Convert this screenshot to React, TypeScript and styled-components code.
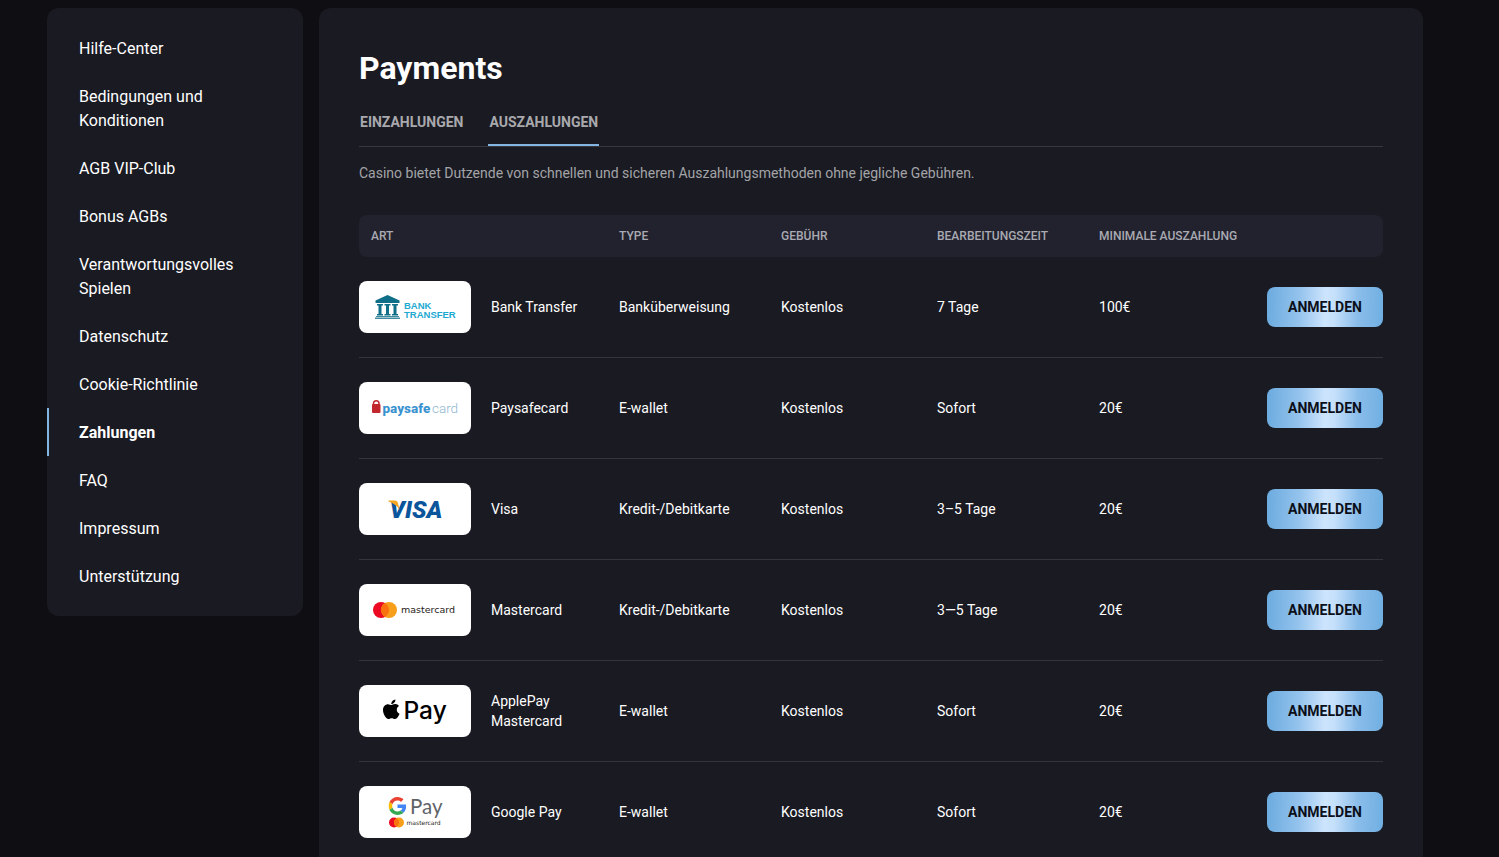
import React, { useState } from "react";
import styled, { createGlobalStyle } from "styled-components";
import { FaApple } from "react-icons/fa";

const GlobalStyle = createGlobalStyle`
  *, *::before, *::after { box-sizing: border-box; }
  body {
    margin: 0;
    background: #0f0f13;
    color: #fff;
    font-family: Roboto, "Liberation Sans", sans-serif;
    font-size: 14px;
    line-height: 20px;
  }
`;

const Page = styled.div`
  display: flex;
  align-items: flex-start;
  gap: 16px;
  padding: 8px 76px 8px 47px;
`;

const Sidebar = styled.nav`
  flex: 0 0 256px;
  padding: 16px 0;
  border-radius: 12px;
  background: #1a1a22;
`;

const NavList = styled.ul`
  margin: 0;
  padding: 0;
  list-style: none;
`;

const NavLink = styled.a<{ $active: boolean }>`
  display: block;
  padding: 13px 32px 11px 30px;
  border-left: 2px solid ${(p) => (p.$active ? "#84b5e0" : "transparent")};
  color: #fff;
  font-size: 16px;
  line-height: 24px;
  font-weight: ${(p) => (p.$active ? 700 : 400)};
  text-decoration: none;
`;

const Panel = styled.main`
  flex: 1;
  min-width: 0;
  padding: 40px;
  border-radius: 12px;
  background: #1a1a22;
`;

const Title = styled.h1`
  margin: 0 0 24px;
  font-size: 32px;
  line-height: 40px;
  font-weight: 700;
`;

const Tabs = styled.div`
  display: flex;
  gap: 24px;
  border-bottom: 1px solid #37383f;
`;

const Tab = styled.button<{ $active: boolean }>`
  padding: 0 1px 12px;
  border: 0;
  border-bottom: 2px solid ${(p) => (p.$active ? "#84b5e0" : "transparent")};
  background: none;
  color: #a9a9ad;
  font: 700 14px/20px Roboto, "Liberation Sans", sans-serif;
  text-transform: uppercase;
  cursor: pointer;
`;

const Intro = styled.p`
  margin: 16px 0 32px;
  color: #a3a4a7;
`;

const Table = styled.table`
  width: 100%;
  table-layout: fixed;
  border-spacing: 0;
`;

const Col = styled.col<{ $width?: number }>`
  width: ${(p) => (p.$width ? `${p.$width}px` : "auto")};
`;

const HeadCell = styled.th`
  height: 42px;
  padding: 0 12px;
  background: #22222e;
  color: #a9aab2;
  font-size: 12px;
  line-height: 16px;
  font-weight: 500;
  text-align: left;
  text-transform: uppercase;
  white-space: nowrap;
  &:first-child { border-radius: 8px 0 0 8px; }
  &:last-child { border-radius: 0 8px 8px 0; }
`;

const Cell = styled.td`
  height: 101px;
  padding: 0 12px;
  border-bottom: 1px solid #33343c;
`;

const LogoCell = styled(Cell)`
  padding: 0;
`;

const ActionCell = styled(Cell)`
  padding: 0;
  text-align: right;
`;

const LogoCard = styled.div`
  width: 112px;
  height: 52px;
  border-radius: 8px;
  background: #fff;
`;

const LogoSvg = styled.svg`
  display: block;
  width: 112px;
  height: 52px;
`;

const SignInButton = styled.button`
  min-width: 116px;
  height: 40px;
  padding: 0 20px;
  border: 0;
  border-radius: 8px;
  background: linear-gradient(92deg, #6babdf 0%, #94c3ed 28%, #cde4fd 50%, #c5e0fb 58%, #8abdea 78%, #70afe2 100%);
  color: #0c0f1a;
  font: 700 14px/20px Roboto, "Liberation Sans", sans-serif;
  text-transform: uppercase;
  cursor: pointer;
`;

function BankLogo() {
  return (
    <LogoSvg viewBox="0 0 224 104" role="img" aria-label="Bank Transfer">
      <g fill="#0f6f88">
        <path d="M57 28 L81 39 V44 H33 V39 Z" />
        {[36, 51, 66].map((x) => (
          <path key={x} d={`M${x} 46 h12 v3 h-3 v17 h3 v3 h-12 v-3 h3 v-17 h-3 z`} />
        ))}
        <path d="M34 70 H80 V72 H34 Z M32 73 H82 V76 H32 Z" opacity="0.8" />
      </g>
      <g fill="#1ea9d2" fontFamily="Liberation Sans, sans-serif" fontWeight="700" fontSize="19">
        <text x="90" y="56">BANK</text>
        <text x="90" y="73">TRANSFER</text>
      </g>
    </LogoSvg>
  );
}

function PaysafeLogo() {
  return (
    <LogoSvg viewBox="0 0 224 104" role="img" aria-label="Paysafecard">
      <path d="M29 45 V43 a5 5 0 0 1 11 0 V45" fill="none" stroke="#c1272d" strokeWidth="3" />
      <rect x="26" y="44" width="17" height="18" rx="2" fill="#c1272d" />
      <g fontFamily="Roboto, sans-serif" fontSize="27">
        <text x="47" y="61" fontWeight="800" fill="#3a92cf">paysafe</text>
        <text x="146" y="61" fontWeight="300" fill="#8fb6d0">card</text>
      </g>
    </LogoSvg>
  );
}

function VisaLogo() {
  return (
    <LogoSvg viewBox="0 0 224 104" role="img" aria-label="Visa">
      <text x="61" y="69" fontFamily="Roboto, sans-serif" fontStyle="italic" fontWeight="900" fontSize="48" fill="#0a559b">VISA</text>
      <path d="M59 35 H72 Q77 35 78 40 L81 54 Q75 42 59 37 Z" fill="#f5a623" />
    </LogoSvg>
  );
}

function Rings({ x, y, r }: { x: number; y: number; r: number }) {
  const half = r / 2;
  const reach = Math.sqrt(r * r - half * half);
  return (
    <>
      <circle cx={x - half} cy={y} r={r} fill="#eb0a22" />
      <circle cx={x + half} cy={y} r={r} fill="#f79e1b" />
      <path
        d={`M${x} ${y - reach} A${r} ${r} 0 0 1 ${x} ${y + reach} A${r} ${r} 0 0 1 ${x} ${y - reach} Z`}
        fill="#f9720f"
      />
    </>
  );
}

function MastercardLogo() {
  return (
    <LogoSvg viewBox="0 0 224 104" role="img" aria-label="Mastercard">
      <Rings x={52} y={52} r={16} />
      <text x="84" y="58" fontFamily="DejaVu Sans, sans-serif" fontSize="19" fill="#1f1b18">mastercard</text>
    </LogoSvg>
  );
}

function ApplePayLogo() {
  return (
    <LogoSvg viewBox="0 0 224 104" role="img" aria-label="Apple Pay">
      <FaApple x={42} y={26} size={45} color="#000" />
      <text x="89" y="68" fontFamily="Inter, sans-serif" fontWeight="500" fontSize="49" fill="#000">Pay</text>
    </LogoSvg>
  );
}

function GooglePayLogo() {
  return (
    <LogoSvg viewBox="0 0 224 104" role="img" aria-label="Google Pay">
      <svg x="59" y="22" width="36" height="36" viewBox="0 0 48 48">
        <path fill="#EA4335" d="M24 9.5c3.54 0 6.71 1.22 9.21 3.6l6.85-6.85C35.9 2.38 30.47 0 24 0 14.62 0 6.51 5.38 2.56 13.22l7.98 6.19C12.43 13.72 17.74 9.5 24 9.5z" />
        <path fill="#4285F4" d="M46.98 24.55c0-1.57-.15-3.09-.38-4.55H24v9.02h12.94c-.58 2.96-2.26 5.48-4.78 7.18l7.73 6c4.51-4.18 7.09-10.36 7.09-17.65z" />
        <path fill="#FBBC05" d="M10.53 28.59c-.48-1.45-.76-2.99-.76-4.59s.27-3.14.76-4.59l-7.98-6.19C.92 16.46 0 20.12 0 24c0 3.88.92 7.54 2.56 10.78l7.97-6.19z" />
        <path fill="#34A853" d="M24 48c6.48 0 11.93-2.13 15.89-5.81l-7.73-6c-2.15 1.45-4.92 2.3-8.16 2.3-6.26 0-11.57-4.22-13.47-9.91l-7.98 6.19C6.51 42.62 14.62 48 24 48z" />
      </svg>
      <text x="102" y="55" fontFamily="Lato, sans-serif" fontSize="41" fill="#5f6368">Pay</text>
      <Rings x={75} y={73} r={10} />
      <text x="95" y="78" fontFamily="DejaVu Sans, sans-serif" fontSize="12" fill="#1f1b18">mastercard</text>
    </LogoSvg>
  );
}

const navItems = [
  "Hilfe-Center",
  "Bedingungen und Konditionen",
  "AGB VIP-Club",
  "Bonus AGBs",
  "Verantwortungsvolles Spielen",
  "Datenschutz",
  "Cookie-Richtlinie",
  "Zahlungen",
  "FAQ",
  "Impressum",
  "Unterstützung",
];

const tabs = ["Einzahlungen", "Auszahlungen"];

const methods = [
  { Logo: BankLogo, name: "Bank Transfer", type: "Banküberweisung", time: "7 Tage", min: "100€" },
  { Logo: PaysafeLogo, name: "Paysafecard", type: "E-wallet", time: "Sofort", min: "20€" },
  { Logo: VisaLogo, name: "Visa", type: "Kredit-/Debitkarte", time: "3–5 Tage", min: "20€" },
  { Logo: MastercardLogo, name: "Mastercard", type: "Kredit-/Debitkarte", time: "3—5 Tage", min: "20€" },
  { Logo: ApplePayLogo, name: "ApplePay Mastercard", type: "E-wallet", time: "Sofort", min: "20€" },
  { Logo: GooglePayLogo, name: "Google Pay", type: "E-wallet", time: "Sofort", min: "20€" },
];

export default function App() {
  const [tab, setTab] = useState("Auszahlungen");

  return (
    <>
      <GlobalStyle />
      <Page>
        <Sidebar>
          <NavList>
            {navItems.map((item) => (
              <li key={item}>
                <NavLink href="#" $active={item === "Zahlungen"}>{item}</NavLink>
              </li>
            ))}
          </NavList>
        </Sidebar>
        <Panel>
          <Title>Payments</Title>
          <Tabs role="tablist">
            {tabs.map((name) => (
              <Tab
                key={name}
                type="button"
                role="tab"
                aria-selected={tab === name}
                $active={tab === name}
                onClick={() => setTab(name)}
              >
                {name}
              </Tab>
            ))}
          </Tabs>
          <Intro>Casino bietet Dutzende von schnellen und sicheren Auszahlungsmethoden ohne jegliche Gebühren.</Intro>
          <Table>
            <colgroup>
              <Col $width={120} />
              <Col $width={128} />
              <Col $width={162} />
              <Col $width={156} />
              <Col $width={162} />
              <Col />
              <Col $width={116} />
            </colgroup>
            <thead>
              <tr>
                <HeadCell colSpan={2}>Art</HeadCell>
                <HeadCell>Type</HeadCell>
                <HeadCell>Gebühr</HeadCell>
                <HeadCell>Bearbeitungszeit</HeadCell>
                <HeadCell colSpan={2}>Minimale Auszahlung</HeadCell>
              </tr>
            </thead>
            <tbody>
              {methods.map(({ Logo, name, type, time, min }) => (
                <tr key={name}>
                  <LogoCell>
                    <LogoCard><Logo /></LogoCard>
                  </LogoCell>
                  <Cell>{name}</Cell>
                  <Cell>{type}</Cell>
                  <Cell>Kostenlos</Cell>
                  <Cell>{time}</Cell>
                  <Cell>{min}</Cell>
                  <ActionCell>
                    <SignInButton type="button">Anmelden</SignInButton>
                  </ActionCell>
                </tr>
              ))}
            </tbody>
          </Table>
        </Panel>
      </Page>
    </>
  );
}
